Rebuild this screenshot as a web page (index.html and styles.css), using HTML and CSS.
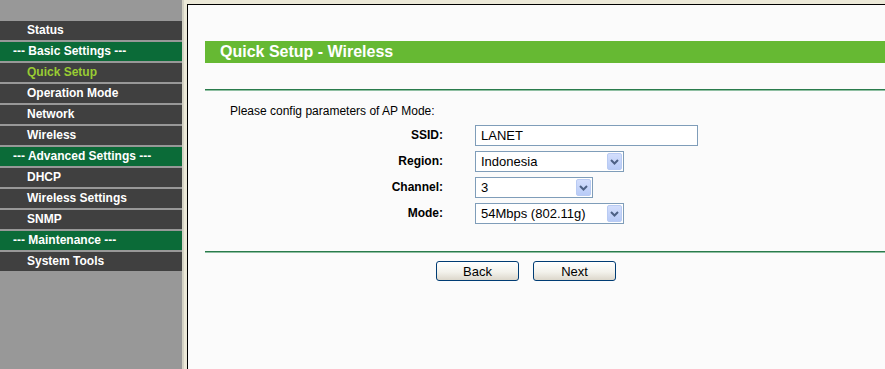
FILE: index.html
```html
<!DOCTYPE html>
<html lang="en">

<head>
    <meta charset="UTF-8">
    <title>Quick Setup - Wireless</title>
    <link rel="stylesheet" href="styles.css">
</head>

<body>
    <div class="page">
        <nav class="menu">
            <ul>
                <li class="item">Status</li>
                <li class="group">--- Basic Settings ---</li>
                <li class="item active">Quick Setup</li>
                <li class="item">Operation Mode</li>
                <li class="item">Network</li>
                <li class="item">Wireless</li>
                <li class="group">--- Advanced Settings ---</li>
                <li class="item">DHCP</li>
                <li class="item">Wireless Settings</li>
                <li class="item">SNMP</li>
                <li class="group">--- Maintenance ---</li>
                <li class="item">System Tools</li>
            </ul>
        </nav>
        <div class="divider"></div>
        <main class="frame">
            <div class="content">
                <div class="title">Quick Setup - Wireless</div>
                <div class="rule"></div>
                <p class="intro">Please config parameters of AP Mode:</p>
                <div class="form">
                    <label class="label">SSID:</label>
                    <div class="field"><input type="text" class="text-input" value="LANET"></div>

                    <label class="label">Region:</label>
                    <div class="field">
                        <div class="select wide">
                            <span class="select-value">Indonesia</span>
                            <span class="select-arrow"><svg width="15" height="17" viewBox="0 0 15 17"><polyline points="4,7 7.5,10.5 11,7" fill="none" stroke="#4d6185" stroke-width="2"/></svg></span>
                        </div>
                    </div>

                    <label class="label">Channel:</label>
                    <div class="field">
                        <div class="select narrow">
                            <span class="select-value">3</span>
                            <span class="select-arrow"><svg width="15" height="17" viewBox="0 0 15 17"><polyline points="4,7 7.5,10.5 11,7" fill="none" stroke="#4d6185" stroke-width="2"/></svg></span>
                        </div>
                    </div>

                    <label class="label">Mode:</label>
                    <div class="field">
                        <div class="select wide">
                            <span class="select-value">54Mbps (802.11g)</span>
                            <span class="select-arrow"><svg width="15" height="17" viewBox="0 0 15 17"><polyline points="4,7 7.5,10.5 11,7" fill="none" stroke="#4d6185" stroke-width="2"/></svg></span>
                        </div>
                    </div>
                </div>
                <div class="rule bottom"></div>
                <div class="actions">
                    <button class="btn">Back</button>
                    <button class="btn">Next</button>
                </div>
            </div>
        </main>
    </div>
</body>

</html>
```

FILE: styles.css
```css
body {
    margin: 0;
    font-family: "Liberation Sans", Arial, sans-serif;
    background: #fbfbfb;
}

.page {
    display: flex;
    height: 100vh;
    overflow: hidden;
}

/* left menu */

.menu {
    width: 182px;
    flex-shrink: 0;
    background: #989898;
    padding-top: 21px;
}

.menu ul {
    list-style: none;
    margin: 0;
    padding: 0;
}

.menu li {
    height: 19px;
    line-height: 19px;
    margin-bottom: 2px;
    font-size: 12px;
    font-weight: bold;
    color: #fff;
    white-space: nowrap;
}

.item {
    background: #404040;
    padding-left: 27px;
}

.item.active {
    color: #99cc33;
}

.group {
    background: #0b6b38;
    padding-left: 13px;
}

.divider {
    width: 5px;
    flex-shrink: 0;
    background: linear-gradient(to right, #d4d2c4 0 2px, #ece9d8 2px);
}

/* right frame */

.frame {
    flex-grow: 1;
    background: #ece9d8;
    padding-top: 4px;
    display: flex;
}

.content {
    flex-grow: 1;
    background: #fbfbfb;
    border-top: 1px solid #000;
    border-left: 1px solid #000;
    padding: 36px 0 0 17px;
}

.title {
    height: 22px;
    line-height: 22px;
    background: #66b933;
    color: #fff;
    font-size: 16px;
    font-weight: bold;
    padding-left: 15px;
}

.rule {
    margin-top: 26px;
    border-top: 1px solid #2a7b4c;
    border-bottom: 1px solid #8fbfa2;
}

.rule.bottom {
    margin-top: 25px;
}

.intro {
    margin: 13px 0 0 25px;
    font-size: 12px;
    line-height: 14px;
    color: #000;
}

.form {
    margin-top: 4px;
    display: grid;
    grid-template-columns: 238px auto;
    grid-auto-rows: 26px;
    column-gap: 32px;
    align-items: center;
}

.label {
    text-align: right;
    font-size: 12px;
    font-weight: bold;
    color: #000;
}

.field {
    display: flex;
}

.text-input {
    box-sizing: border-box;
    width: 223px;
    height: 21px;
    border: 1px solid #7f9db9;
    padding: 0 5px;
    margin: 0;
    font-family: inherit;
    font-size: 13px;
    color: #000;
    background: #fff;
    outline: none;
}

.select {
    box-sizing: border-box;
    height: 21px;
    border: 1px solid #7f9db9;
    background: #fff;
    display: flex;
    align-items: center;
    padding: 0 1px 0 5px;
    font-size: 13px;
    color: #000;
}

.select.wide {
    width: 149px;
}

.select.narrow {
    width: 118px;
}

.select-value {
    flex-grow: 1;
}

.select-arrow {
    box-sizing: border-box;
    width: 15px;
    height: 17px;
    border: 1px solid #b9cbf3;
    border-radius: 2px;
    background: linear-gradient(#d3defc, #b8cbf7);
    display: flex;
    align-items: center;
    justify-content: center;
}

.select-arrow svg {
    flex-shrink: 0;
}

.actions {
    margin: 8px 0 0 231px;
    display: flex;
    gap: 14px;
}

.btn {
    box-sizing: border-box;
    width: 83px;
    height: 20px;
    padding: 0;
    border: 1px solid #003c74;
    border-radius: 3px;
    background: linear-gradient(#ffffff, #f3f2ec 55%, #dcd7cb);
    font-family: inherit;
    font-size: 13px;
    color: #000;
    cursor: pointer;
}
```
